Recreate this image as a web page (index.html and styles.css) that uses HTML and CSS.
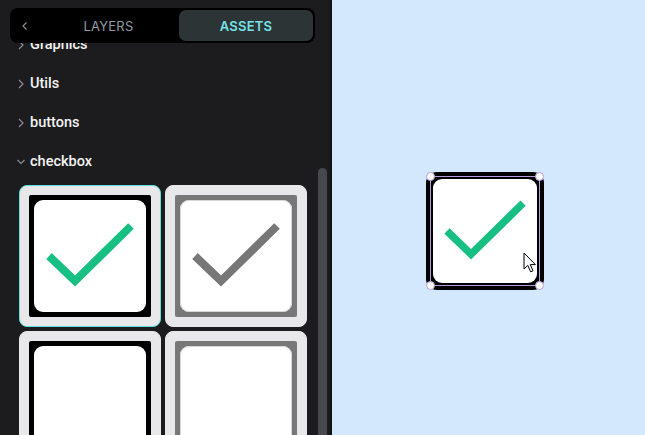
FILE: index.html
```html
<!DOCTYPE html>
<html>
<head>
<meta charset="utf-8">
<link rel="stylesheet" href="styles.css">
</head>
<body>
<div class="app">
  <aside class="panel">
    <ul class="tree">
      <li class="row"><svg class="chev" width="8" height="10" viewBox="0 0 8 10"><polyline points="2,1 6,5 2,9" /></svg><span>Graphics</span></li>
      <li class="row"><svg class="chev" width="8" height="10" viewBox="0 0 8 10"><polyline points="2,1 6,5 2,9" /></svg><span>Utils</span></li>
      <li class="row"><svg class="chev" width="8" height="10" viewBox="0 0 8 10"><polyline points="2,1 6,5 2,9" /></svg><span>buttons</span></li>
      <li class="row"><svg class="chev" width="8" height="10" viewBox="0 0 8 10"><polyline points="0.5,3 4,6.5 7.5,3" /></svg><span>checkbox</span></li>
    </ul>
    <div class="grid">
      <div class="card selected">
        <div class="ring dark"><div class="face"><svg class="tick" viewBox="0 0 112 112"><polyline points="15,56 41,81 97,26" stroke="#18bf82"/></svg></div></div>
      </div>
      <div class="card">
        <div class="ring grey"><div class="face soft"><svg class="tick" viewBox="0 0 112 112"><polyline points="15,56 41,81 97,26" stroke="#777777"/></svg></div></div>
      </div>
      <div class="card">
        <div class="ring dark"><div class="face"></div></div>
      </div>
      <div class="card">
        <div class="ring grey"><div class="face soft"></div></div>
      </div>
    </div>
    <div class="tabs">
      <div class="back"><svg width="8" height="10" viewBox="0 0 8 10"><polyline points="5.5,1.5 2,5 5.5,8.5"/></svg></div>
      <div class="tab">LAYERS</div>
      <div class="tab active">ASSETS</div>
    </div>
    <div class="scrollbar"></div>
  </aside>
  <main class="canvas">
    <div class="node">
      <div class="node-face"><svg class="tick" viewBox="0 0 112 112"><polyline points="15,56 41,81 97,26" stroke="#18bf82"/></svg></div>
      <div class="selection">
        <span class="handle tl"></span><span class="handle tr"></span><span class="handle bl"></span><span class="handle br"></span>
      </div>
    </div>
    <svg class="cursor" width="14" height="22" viewBox="0 0 14 22"><path d="M1 1 L1 17 L4.8 13.4 L7.6 19.8 L10 18.8 L7.3 12.6 L12.4 12.6 Z" fill="#fff" stroke="#000" stroke-width="1" stroke-linejoin="round"/></svg>
  </main>
</div>
</body>
</html>
```
FILE: styles.css
```css
* { box-sizing: border-box; }
html, body { margin: 0; padding: 0; }
body {
  width: 645px;
  height: 435px;
  overflow: hidden;
  font-family: Inter, "Open Sans", "Liberation Sans", sans-serif;
}
.app {
  display: flex;
  width: 645px;
  height: 435px;
}
.panel {
  position: relative;
  width: 332px;
  height: 435px;
  flex: none;
  background: #1c1c1e;
  border-right: 2px solid #111213;
  overflow: hidden;
}
.tree {
  list-style: none;
  margin: 0;
  padding: 25px 0 0 0;
}
.row {
  display: flex;
  align-items: center;
  height: 39px;
  padding-left: 17px;
  gap: 5px;
  color: #f2f2f2;
  font-family: Roboto, "Liberation Sans", sans-serif;
  font-size: 14.5px;
  font-weight: 500;
}
.chev polyline, .back polyline {
  fill: none;
  stroke: #8c8c90;
  stroke-width: 1.2;
}
.grid {
  display: grid;
  grid-template-columns: 142px 142px;
  column-gap: 4px;
  row-gap: 4px;
  padding: 4px 0 0 19px;
}
.card {
  width: 142px;
  height: 142px;
  background: #e8e8ea;
  border: 1px solid #e8e8ea;
  border-radius: 8px;
  padding: 9px;
}
.card.selected { border-color: #59e1dc; }
.ring {
  height: 122px;
  padding: 5px;
  border-radius: 2px;
}
.ring.dark { background: #000; }
.ring.grey { background: #777777; }
.face {
  height: 112px;
  background: #fff;
  border-radius: 9px;
  position: relative;
}
.face.soft { box-shadow: inset 0 0 0 1px #d6d6d6; }
.tick {
  display: block;
  width: 100%;
  height: 100%;
}
.tick polyline {
  fill: none;
  stroke-width: 8;
  stroke-linecap: butt;
  stroke-linejoin: miter;
}
.tabs {
  position: absolute;
  top: 8px;
  left: 10px;
  width: 305px;
  height: 35px;
  background: #000;
  border-radius: 8px;
  padding: 2px;
  display: flex;
  align-items: stretch;
}
.back {
  width: 26px;
  display: flex;
  align-items: center;
  justify-content: center;
}
.tab {
  flex: 1;
  display: flex;
  align-items: center;
  justify-content: center;
  font-size: 13px;
  color: #8e9aa2;
  letter-spacing: 0.2px;
}
.tab.active {
  flex: none;
  width: 134px;
  background: #2d3436;
  border-radius: 7px;
  color: #74e2e6;
  font-weight: 600;
}
.scrollbar {
  position: absolute;
  right: 3px;
  top: 168px;
  bottom: -10px;
  width: 9px;
  border-radius: 5px;
  background: #45494c;
}
.canvas {
  position: relative;
  flex: 1;
  background: #d3e7fd;
}
.node {
  position: absolute;
  left: 94px;
  top: 172px;
  width: 118px;
  height: 118px;
  background: #000;
  border-radius: 11px;
  padding: 7px;
}
.node-face {
  width: 104px;
  height: 104px;
  background: #fff;
  border-radius: 9px;
}
.selection {
  position: absolute;
  left: 4px;
  top: 4px;
  width: 110px;
  height: 110px;
  border: 1px solid #b89ad8;
}
.handle {
  position: absolute;
  width: 9px;
  height: 9px;
  border-radius: 50%;
  background: #fff;
  border: 1px solid #b89ad8;
}
.handle.tl { left: -5px; top: -5px; }
.handle.tr { right: -5px; top: -5px; }
.handle.bl { left: -5px; bottom: -5px; }
.handle.br { right: -5px; bottom: -5px; }
.cursor {
  position: absolute;
  left: 191px;
  top: 252px;
}
```
